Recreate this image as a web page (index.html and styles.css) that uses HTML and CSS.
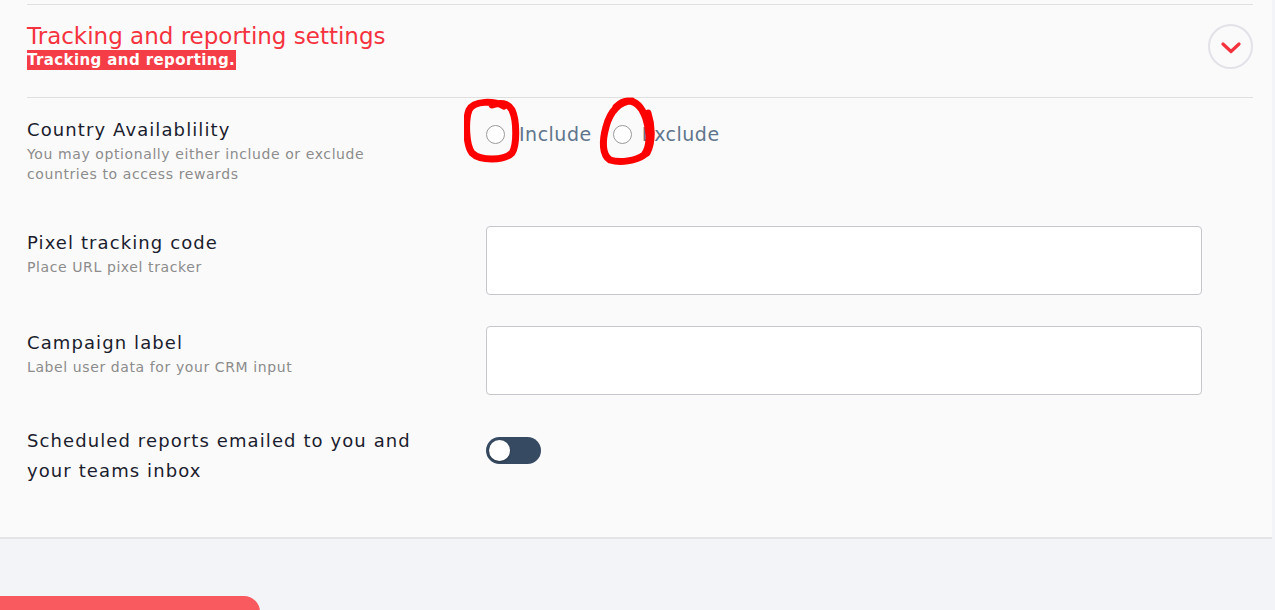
FILE: index.html
```html
<!DOCTYPE html>
<html>
  <head>
    <meta charset="utf-8" />
    <title>Tracking and reporting settings</title>
    <link rel="stylesheet" href="styles.css">
  </head>
  <body>
    <div class="panel">
      <div class="head">
        <div class="head-text">
          <h2 class="title">Tracking and reporting settings</h2>
          <span class="subtitle">Tracking and reporting.</span>
        </div>
        <div class="toggle-btn">
          <svg width="20" height="12" viewBox="0 0 20 12">
            <path d="M2 2 L10 9.5 L18 2" fill="none" stroke="#f5333f" stroke-width="3.2" stroke-linecap="round" stroke-linejoin="round"/>
          </svg>
        </div>
      </div>

      <div class="row row-first">
        <div class="label">
          <div class="name">Country Availablility</div>
          <div class="desc">You may optionally either include or exclude countries to access rewards</div>
        </div>
        <div class="control radios">
          <label class="radio"><span class="dot"></span>Include</label>
          <label class="radio"><span class="dot"></span>Exclude</label>
          <!-- hand drawn marks -->
          <svg class="scribble" width="300" height="80" viewBox="0 0 300 80">
            <path d="M40 9 C30 4 10 3 5 13 C1 24 2 48 8 56 C16 64 40 64 48 56 C53 48 53 24 48 13 C44 6 36 5 28 8" fill="none" stroke="#ff0000" stroke-width="7" stroke-linecap="round" stroke-linejoin="round"/>
            <path d="M168 4 C156 4 146 14 142 30 C138 44 138 58 146 63 C156 66 172 64 180 58 C186 50 186 36 182 22 C178 10 172 4 164 4 C158 4 154 8 152 10" fill="none" stroke="#ff0000" stroke-width="7" stroke-linecap="round" stroke-linejoin="round"/>
            <path d="M184 16 C188 28 189 44 183 56" fill="none" stroke="#ff0000" stroke-width="7" stroke-linecap="round"/>
          </svg>
        </div>
      </div>

      <div class="row">
        <div class="label">
          <div class="name">Pixel tracking code</div>
          <div class="desc">Place URL pixel tracker</div>
        </div>
        <div class="control">
          <input class="field" type="text" />
        </div>
      </div>

      <div class="row">
        <div class="label">
          <div class="name">Campaign label</div>
          <div class="desc">Label user data for your CRM input</div>
        </div>
        <div class="control">
          <input class="field" type="text" />
        </div>
      </div>

      <div class="row row-last">
        <div class="label">
          <div class="name big">Scheduled reports emailed to you and your teams inbox</div>
        </div>
        <div class="control">
          <div class="switch"><span class="knob"></span></div>
        </div>
      </div>
    </div>

    <div class="footer">
      <div class="save"></div>
    </div>
  </body>
</html>
```

FILE: styles.css
```css
* {
  margin: 0;
  padding: 0;
  box-sizing: border-box;
}
body {
  background-color: #f3f4f8;
  font-family: "DejaVu Sans", "Noto Sans", sans-serif;
  color: #1a1d2e;
}
.panel {
  width: 1272px;
  background-color: #fafafa;
  padding: 4px 19px 51px 27px;
  border-bottom: 2px solid #e4e4e6;
}
.head {
  display: flex;
  align-items: center;
  justify-content: space-between;
  border-top: 1px solid #e0e0e0;
  border-bottom: 1px solid #e0e0e0;
  padding: 17px 0 27px;
}
.title {
  font-size: 23px;
  font-weight: normal;
  line-height: 28px;
  color: #f5333f;
}
.subtitle {
  display: inline-block;
  background-color: #f53d47;
  color: #fff;
  font-size: 15px;
  font-weight: bold;
  letter-spacing: 0.4px;
  line-height: 20px;
  padding-right: 1px;
}
.toggle-btn {
  width: 45px;
  height: 45px;
  border: 2px solid #e2e2e8;
  border-radius: 50%;
  display: flex;
  align-items: center;
  justify-content: center;
  padding-top: 3px;
}
.row {
  display: flex;
  margin-top: 31px;
}
.row-first {
  margin-top: 19px;
  margin-bottom: 42px;
}
.label {
  width: 400px;
  margin-right: 59px;
}
.name {
  font-size: 18px;
  letter-spacing: 1.1px;
  line-height: 22px;
  padding-top: 6px;
}
.row-first .name {
  padding-top: 2px;
}
.name.big {
  line-height: 30px;
  padding-top: 0;
}
.desc {
  margin-top: 3px;
  font-size: 14px;
  letter-spacing: 0.6px;
  line-height: 20px;
  color: #8c8c8c;
}
.control {
  flex: 1;
}
.field {
  display: block;
  width: 716px;
  height: 69px;
  border: 1px solid #c6c6cc;
  border-radius: 4px;
  background-color: #fff;
}
.radios {
  position: relative;
  display: flex;
  align-items: flex-start;
  gap: 21px;
  padding-top: 3px;
}
.radio {
  display: flex;
  align-items: center;
  font-size: 19px;
  letter-spacing: 0.5px;
  line-height: 28px;
  color: #60758c;
}
.dot {
  width: 19px;
  height: 19px;
  border: 1px solid #9a9a9a;
  border-radius: 50%;
  background-color: #fff;
  margin-right: 14px;
}
.radio + .radio .dot {
  margin-right: 10px;
}
.scribble {
  position: absolute;
  left: -22px;
  top: -20px;
  pointer-events: none;
}
.switch {
  margin-top: 11px;
  width: 55px;
  height: 27px;
  border-radius: 14px;
  background-color: #364a62;
  padding: 3px;
}
.knob {
  display: block;
  width: 21px;
  height: 21px;
  border-radius: 50%;
  background-color: #fff;
  box-shadow: 0 1px 2px rgba(0, 0, 0, 0.3);
}
.footer {
  padding-top: 57px;
}
.save {
  width: 260px;
  height: 40px;
  border-radius: 0 16px 0 0;
  background-color: #f85a5f;
}
```
